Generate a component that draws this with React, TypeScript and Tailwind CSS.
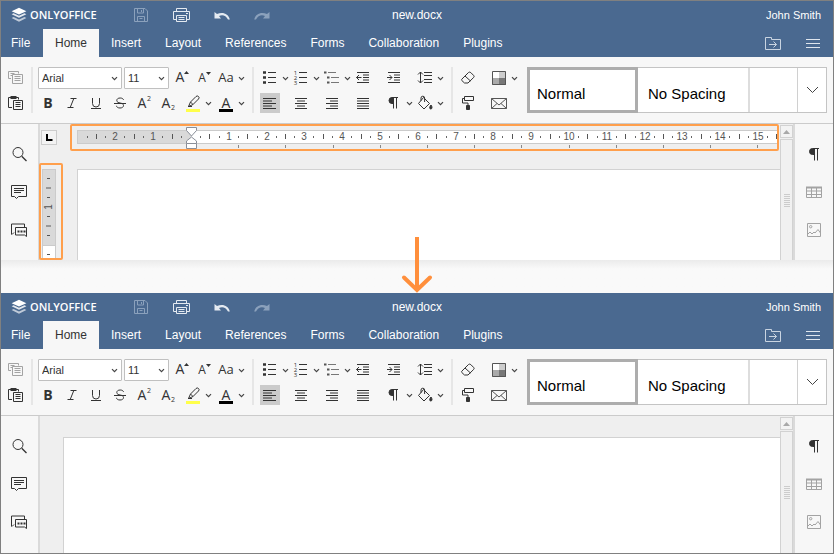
import type { ReactNode } from "react";

const INK = "#333333";
const MUTED = "#a3a3a3";

function Icon({ children, color = INK, size = 20 }: { children: ReactNode; color?: string; size?: number }) {
  return (
    <svg width={size} height={size} viewBox="0 0 20 20" fill="none" stroke={color} strokeWidth={1} className="shrink-0" aria-hidden="true">
      {children}
    </svg>
  );
}

function Chevron() {
  return (
    <svg width="9" height="9" viewBox="0 0 9 9" fill="none" stroke="#444444" strokeWidth={1.2} className="shrink-0" aria-hidden="true">
      <path d="M2 3.2 4.5 5.7 7 3.2" />
    </svg>
  );
}

function Glyph({ children, x = 10, y = 15, size = 14, bold = false }: { children: string; x?: number; y?: number; size?: number; bold?: boolean }) {
  return (
    <text
      x={x}
      y={y}
      fontSize={size}
      textAnchor="middle"
      fill={INK}
      stroke="none"
      fontWeight={bold ? 700 : 400}
      fontFamily='"Open Sans", "Liberation Sans", sans-serif'
    >
      {children}
    </text>
  );
}

/* ---------- title bar ---------- */

function Logo() {
  return (
    <div className="flex items-center gap-[3px]">
      <svg width="16" height="16" viewBox="0 0 16 16" fill="#ffffff" aria-hidden="true">
        <path d="M8 .8 15.4 4.2 8 7.6.6 4.2z" />
        <path d="M.6 7.2 2.6 6.2 8 8.8l5.400-2.600 2 1L8 10.700z" opacity=".85" />
        <path d="M.6 10.900l2-1L8 12.500l5.400-2.600 2 1L8 14.800z" opacity=".65" />
      </svg>
      <span className="font-['Open_Sans','Liberation_Sans',sans-serif] text-[11px] font-semibold leading-4">ONLYOFFICE</span>
    </div>
  );
}

function TitleBar() {
  return (
    <div className="grid h-7 grid-cols-[1fr_auto_1fr] items-center px-[10px]">
      <div className="flex items-center">
        <div className="w-[119px]">
          <Logo />
        </div>
        <button type="button" aria-label="Save" className="flex w-[40px] pl-px">
          <Icon color="#8ba1bc">
            <path d="M3.500 3.500h10.500l2.500 2.500v10.500h-13zM6.500 3.500v4.500h6v-4.500M6.500 16.500v-5h7v5M10.500 5v2M8.500 13.500h3" />
          </Icon>
        </button>
        <button type="button" aria-label="Print" className="flex w-[41px] pl-px">
          <Icon color="#e4eaf1">
            <path d="M5.500 6.500v-3h10v3M5.500 14.500h-3v-8h16v8h-3M5.500 10.500h10v6h-10zM7.500 12.500h6M7.500 14.500h6M15 8.500h2" />
          </Icon>
        </button>
        <button type="button" aria-label="Undo" className="flex w-[40px] pl-px">
          <Icon color="none">
            <path fill="#e4eaf1" d="M2.500 7v6.500h6.500L7 11c3-1.800 7-.8 9 3.500h1.800C16.500 8.500 10.500 6.500 5 9z" />
          </Icon>
        </button>
        <button type="button" aria-label="Redo" className="flex pl-px">
          <Icon color="none">
            <path fill="#8ba1bc" d="M17.500 7v6.500h-6.500l2-2.500c-3-1.800-7-.8-9 3.500H2.200C3.500 8.500 9.500 6.500 15 9z" />
          </Icon>
        </button>
      </div>
      <h1 className="text-xs">new.docx</h1>
      <span className="pr-[2px] text-right text-[11px]">John Smith</span>
    </div>
  );
}

const TABS = ["Insert", "Layout", "References", "Forms", "Collaboration", "Plugins"];

function TabBar() {
  return (
    <nav className="flex h-7 items-stretch text-xs">
      <button type="button" className="w-[42px] pl-[10px] text-left">File</button>
      <button type="button" className="bg-[#f7f7f7] px-3 text-[#333333]">Home</button>
      {TABS.map((t) => (
        <button key={t} type="button" className="px-3">{t}</button>
      ))}
      <div className="ml-auto flex items-center gap-5 pr-[10px]">
        <button type="button" aria-label="Open file location">
          <Icon color="#c9d4e1">
            <path d="M2.500 4.500h6v2h9v10h-15zM6 11.500h7.500M10.500 8.500l3 3-3 3" />
          </Icon>
        </button>
        <button type="button" aria-label="View settings">
          <Icon color="#dfe6ee">
            <path d="M3 6.500h14M3 10.500h14M3 14.500h14" />
          </Icon>
        </button>
      </div>
    </nav>
  );
}

/* ---------- toolbar ---------- */

function Tool({ label, children, slot = "w-[31px]", split = false, active = false }: { label: string; children: ReactNode; slot?: string; split?: boolean; active?: boolean }) {
  return (
    <div className={`flex shrink-0 ${slot}`}>
      <button type="button" aria-label={label} aria-pressed={active} className="flex items-center">
        <span className={`mx-px flex h-5 w-5 items-center justify-center ${active ? "bg-[#cbcbcb]" : ""}`}>{children}</span>
        {split && <Chevron />}
      </button>
    </div>
  );
}

function Separator() {
  return <div className="w-[2px] shrink-0 bg-[#e6e6e6]" />;
}

function Combo({ label, value, options, width }: { label: string; value: string; options: string[]; width: string }) {
  return (
    <label className={`relative flex h-[22px] shrink-0 ${width}`}>
      <span className="sr-only">{label}</span>
      <select defaultValue={value} className="block h-[22px] w-full appearance-none rounded-[1px] border border-[#c0c0c0] bg-white pl-[3px] text-[11px] leading-4 text-[#333333]">
        {options.map((o) => (
          <option key={o}>{o}</option>
        ))}
      </select>
      <span className="pointer-events-none absolute right-[3px] top-[7px]">
        <Chevron />
      </span>
    </label>
  );
}

function FontTools() {
  return (
    <div className="flex w-[217px] shrink-0 flex-col justify-between">
      <div className="flex h-[22px] items-center gap-[2px] pl-[3px]">
        <Combo label="Font" value="Arial" options={["Arial", "Calibri", "Georgia"]} width="w-[84px]" />
        <Combo label="Font size" value="11" options={["10", "11", "12"]} width="w-[45px]" />
        <div className="flex">
          <Tool label="Increase font size" slot="w-[22px]">
            <Icon><Glyph x={8} y={14}>A</Glyph><path d="M12 6h5l-2.500-3z" fill={INK} stroke="none" /></Icon>
          </Tool>
          <Tool label="Decrease font size" slot="w-[22px]">
            <Icon><Glyph x={8} y={14} size={12}>A</Glyph><path d="M12 4h5l-2.500 3z" fill={INK} stroke="none" /></Icon>
          </Tool>
          <Tool label="Change case" split>
            <Icon><Glyph x={10} y={14} size={13}>Aa</Glyph></Icon>
          </Tool>
        </div>
      </div>
      <div className="flex h-5 items-center pl-[2px]">
        <Tool label="Bold" slot="w-6"><Icon><Glyph bold>B</Glyph></Icon></Tool>
        <Tool label="Italic" slot="w-6">
          <Icon><path d="M8.500 5.500h6M5.500 14.500h6M11.800 5.500 8.200 14.500" /></Icon>
        </Tool>
        <Tool label="Underline" slot="w-6">
          <Icon><path d="M6.500 5v5.500a3.500 3.500 0 0 0 7 0V5M5 15.500h10" /></Icon>
        </Tool>
        <Tool label="Strikethrough" slot="w-6">
          <Icon><path d="M13.500 7c0-1-1.200-2-3.300-2C8 5 6.800 6 6.800 7.500c0 3.500 6.700 1.500 6.700 5 0 1.500-1.300 2.500-3.500 2.500s-3.500-1-3.500-2.200M4 10.500h12" /></Icon>
        </Tool>
        <Tool label="Superscript" slot="w-6">
          <Icon><Glyph x={8}>A</Glyph><Glyph x={15} y={8} size={7}>2</Glyph></Icon>
        </Tool>
        <Tool label="Subscript" slot="w-[25px]">
          <Icon><Glyph x={8}>A</Glyph><Glyph x={15} y={17} size={7}>2</Glyph></Icon>
        </Tool>
        <Tool label="Highlight color" slot="w-[33px]" split>
          <Icon>
            <path d="M5.500 13.500 7.500 9 13 3.500q1.200-1.200 2.500 0t0 2.500L10 11.500zM7.500 9 10 11.500M5 13.500h4" />
            <rect x="3" y="16" width="14" height="3" fill="#ffff4a" stroke="none" />
          </Icon>
        </Tool>
        <Tool label="Font color" split slot="w-[31px]">
          <Icon><Glyph>A</Glyph><rect x="3" y="16" width="14" height="3" fill="#000000" stroke="none" /></Icon>
        </Tool>
      </div>
    </div>
  );
}

function ParagraphTools() {
  return (
    <div className="flex w-[193px] shrink-0 flex-col justify-between pl-[4px]">
      <div className="flex h-[22px] items-center">
        <Tool label="Bullets" split>
          <Icon>
            <path d="M8 4.500h8M8 9.500h8M8 14.500h8" />
            <path d="M3 4.500h3M3 9.500h3M3 14.500h3" strokeWidth={2.5} />
          </Icon>
        </Tool>
        <Tool label="Numbering" split>
          <Icon>
            <path d="M8 4.500h8M8 9.500h8M8 14.500h8" />
            <Glyph x={4.500} y={7} size={6}>1</Glyph>
            <Glyph x={4.500} y={12} size={6}>2</Glyph>
            <Glyph x={4.500} y={17} size={6}>3</Glyph>
          </Icon>
        </Tool>
        <Tool label="Multilevel list" split>
          <Icon>
            <path d="M6 4.500h8M9 9.500h8M9 14.500h8" stroke="#777777" />
            <path d="M2 4.500h2.500M5 9.500h2.500M5 14.500h2.500" stroke="#555555" strokeWidth={2} />
          </Icon>
        </Tool>
        <Tool label="Decrease indent">
          <Icon><path d="M4 4.500h12M10 7h6M10 9.500h6M10 12h6M4 14.500h12M3.500 9.500h5M6 7 3.500 9.500 6 12" /></Icon>
        </Tool>
        <Tool label="Increase indent">
          <Icon><path d="M4 4.500h12M10 7h6M10 9.500h6M10 12h6M4 14.500h12M3 9.500h5M5.500 7 8 9.500 5.500 12" /></Icon>
        </Tool>
        <Tool label="Line spacing" split>
          <Icon><path d="M9 4.500h8M9 7.500h8M9 11.500h8M9 14.500h8M5.500 4v11M3 6.500 5.500 4 8 6.500M3 12.500 5.500 15 8 12.500" /></Icon>
        </Tool>
      </div>
      <div className="flex h-5 items-center">
        <Tool label="Align left" active>
          <Icon><path d="M3 5.500h13M3 8h9M3 10.500h13M3 13h9M3 15.500h13" /></Icon>
        </Tool>
        <Tool label="Align center">
          <Icon><path d="M4 5.500h12M6 8h8M4 10.500h12M6 13h8M4 15.500h12" /></Icon>
        </Tool>
        <Tool label="Align right">
          <Icon><path d="M4 5.500h12M8 8h8M4 10.500h12M8 13h8M4 15.500h12" /></Icon>
        </Tool>
        <Tool label="Justify">
          <Icon><path d="M4 5.500h12M4 8h12M4 10.500h12M4 13h12M4 15.500h12" /></Icon>
        </Tool>
        <Tool label="Nonprinting characters" split>
          <Icon>
            <path d="M9.500 4v11.500M12.500 4v11.500M9 4.500h5" />
            <path d="M9.500 4.500H8a3 3 0 0 0 0 6h1.500z" fill={INK} />
          </Icon>
        </Tool>
        <Tool label="Shading" split>
          <Icon>
            <path d="M8.500 4.500 14.500 10.500 9 16 3.500 10.500zM6 7.800V5a1.800 1.800 0 0 1 3.600 0v4" />
            <path d="M16 12c1.500 2 1.200 4-.2 4s-1.600-2 .2-4z" fill={INK} />
          </Icon>
        </Tool>
      </div>
    </div>
  );
}

function ExtraTools() {
  return (
    <div className="flex w-[74px] shrink-0 flex-col justify-between pl-[4px]">
      <div className="flex h-[22px] items-center">
        <Tool label="Clear style">
          <Icon><path d="M3.800 11.200 10.500 4.500q1.200-.9 2.300.1l2.800 2.800q1 1 .1 2L10 15H6.500l-2.700-2.500q-.5-.7 0-1.300zM7 8l5.500 5" /></Icon>
        </Tool>
        <Tool label="Color scheme" split>
          <Icon>
            <g stroke="none">
              <rect x="3" y="3" width="7" height="7" fill="#ffffff" />
              <rect x="10" y="3" width="7" height="7" fill="#cccccc" />
              <rect x="3" y="10" width="7" height="7" fill="#aaaaaa" />
              <rect x="10" y="10" width="7" height="7" fill="#777777" />
            </g>
            <path d="M3.500 3.500h13v13h-13z" stroke="#555555" />
          </Icon>
        </Tool>
      </div>
      <div className="flex h-5 items-center">
        <Tool label="Copy style">
          <Icon>
            <path d="M6.500 3.500h9v4h-9zM6.500 5.500h-2v4.500h5.500v2" />
            <path d="M8.500 12.500h3v4h-3z" fill={INK} />
          </Icon>
        </Tool>
        <Tool label="Mail merge">
          <Icon color="#555555"><path d="M2.500 5.500h15v10h-15zM2.500 5.500 10 12l7.500-6.500M2.500 15.500 8 10.500M17.500 15.500 12 10.500" /></Icon>
        </Tool>
      </div>
    </div>
  );
}

function StyleGallery() {
  return (
    <div className="mr-[6px] flex h-[46px] min-w-0 flex-1 border border-[#c4c4c4] bg-white text-[15px] text-black">
      <button type="button" aria-pressed="true" className="-m-px w-[111px] shrink-0 border-[3px] border-[#adadad] pl-[7px] pt-2 text-left">Normal</button>
      <button type="button" className="w-[113px] shrink-0 border-r-2 border-[#dddddd] pl-[11px] pt-2 text-left">No Spacing</button>
      <div className="flex-1" />
      <button type="button" aria-label="More styles" className="flex w-[29px] shrink-0 items-center justify-center border-l border-[#d0d0d0]">
        <svg width="13" height="8" viewBox="0 0 13 8" fill="none" stroke="#444444" aria-hidden="true"><path d="M1 1 6.500 6.500 12 1" /></svg>
      </button>
    </div>
  );
}

function Toolbar() {
  return (
    <div className="flex h-[67px] items-start border-b border-[#cbcbcb] bg-[#f7f7f7] pt-[10px]">
      <div className="flex min-w-0 flex-1 [&>*]:h-[46px]">
        <div className="flex w-[30px] shrink-0 flex-col justify-between pl-[4px]">
          <div className="flex h-[22px] items-center">
            <Tool label="Copy" slot="w-[22px]">
              <Icon color={MUTED}><path d="M5 10.500H2.500v-7h10v2M4.500 5.500h4M4.500 7.500h2M6.500 6.500h10v9h-10zM8.500 8.500h6M8.500 10.500h6M8.500 12.500h6" /></Icon>
            </Tool>
          </div>
          <Tool label="Paste" slot="w-[22px]">
            <Icon><path d="M6 14.500H2.500v-10h10v2M7.500 7.500h9v9h-9zM9.500 9.500h5M9.500 11.500h5M9.500 13.500h5" /><path d="M4.500 4.500h6" strokeWidth={3} /></Icon>
          </Tool>
        </div>
        <Separator />
        <div className="flex pl-[2px]"><FontTools /></div>
        <Separator />
        <div className="flex pl-px"><ParagraphTools /></div>
        <div className="flex pl-[3px]"><Separator /></div>
        <ExtraTools />
        <StyleGallery />
      </div>
    </div>
  );
}

/* ---------- side panels ---------- */

function LeftPanel() {
  return (
    <aside className="flex w-[39px] shrink-0 flex-col items-center gap-[18px] border-r-2 border-[#dadada] bg-[#f7f7f7] pr-[2px] pt-5">
      <button type="button" aria-label="Find">
        <Icon><circle cx="9" cy="8.500" r="5" /><path d="M12.700 12.200 17.500 17" strokeWidth={1.3} /></Icon>
      </button>
      <button type="button" aria-label="Comments">
        <Icon><path d="M2.500 3.500h15v11h-8L7.500 16.500 5.500 14.500h-3zM5 6.500h10M5 8.500h10M5 10.500h7" /></Icon>
      </button>
      <button type="button" aria-label="Chat">
        <Icon><path d="M3 14.500 5 12.500M2.500 14.500v-10.500h13v3M6.500 7.500h11v9l-2-1.500h-9z" /><path d="M8.500 11.500h2M11.500 11.500h2M14.500 11.500h2" strokeWidth={2} /></Icon>
      </button>
    </aside>
  );
}

function RightPanel() {
  return (
    <aside className="flex w-10 shrink-0 flex-col items-center gap-[18px] border-l-2 border-[#dadada] bg-[#f7f7f7] pt-5">
      <button type="button" aria-label="Paragraph settings">
        <Icon>
          <path d="M10.500 4v12.500M13.500 4v12.500M9 4.500h6" />
          <path d="M10.500 4.500H8.500a3 3 0 0 0 0 6h2z" fill={INK} />
        </Icon>
      </button>
      <button type="button" aria-label="Table settings">
        <Icon color={MUTED}><path d="M2.500 5.500h15v10h-15zM2.500 9h15M2.500 12.500h15M7.500 5.500v10M12.500 5.500v10" /><path d="M2 5.500h16" strokeWidth={2} /></Icon>
      </button>
      <button type="button" aria-label="Image settings">
        <Icon color={MUTED}><path d="M3.500 3.500h13v13h-13zM4 14l2-2 2 2 2-2 1 1 3-3.500 2.500 3.500" /><circle cx="6.700" cy="6.700" r="1.200" /></Icon>
      </button>
    </aside>
  );
}

function ScrollBar() {
  return (
    <div className="flex w-[13px] shrink-0 flex-col gap-px bg-[#efefef] pt-px">
      <button type="button" aria-label="Scroll up" className="flex h-[13px] items-center justify-center border border-[#d2d2d2] bg-[#f3f3f3]">
        <svg width="7" height="4" viewBox="0 0 7 4" fill="#a8a8a8" aria-hidden="true"><path d="M0 4h7L3.500 0z" /></svg>
      </button>
      <div className="flex flex-1 flex-col items-center gap-px border-x border-t border-[#d2d2d2] bg-[#f1f1f1] pt-[54px]">
        {[0, 1, 2, 3, 4, 5, 6].map((n) => (
          <span key={n} className="h-px w-[6px] bg-[#cccccc]" />
        ))}
      </div>
    </div>
  );
}

/* ---------- rulers ---------- */

const CM = 37.8;
const ORIGIN = 114;

function HorizontalRuler() {
  const quarters = Array.from({ length: 74 }, (_, n) => n - 11).filter((n) => n !== 0);
  return (
    <svg width="100%" height="20" className="block overflow-visible" role="img" aria-label="Horizontal ruler">
      <rect x="0" y="0" width="100%" height="14" fill="#cbcbcb" />
      <rect x="1" y="1" width="100%" height="12" fill="#ffffff" />
      <rect x="1" y="1" width={ORIGIN} height="12" fill="#d9d9d9" />
      {quarters.map((n) => {
        const x = ORIGIN + (n * CM) / 4;
        if (n % 4 === 0) {
          return (
            <text key={n} x={Math.round(x)} y="10" fontSize="10" textAnchor="middle" fill="#555555" className="font-['Liberation_Sans',sans-serif]">
              {Math.abs(n / 4)}
            </text>
          );
        }
        return n % 2 === 0 ? (
          <rect key={n} x={Math.floor(x)} y="4" width="1" height="5" fill="#555555" />
        ) : (
          <rect key={n} x={Math.floor(x)} y="6" width="1" height="2" fill="#666666" />
        );
      })}
      {Array.from({ length: 12 }, (_, n) => (
        <rect key={n} x={Math.round(ORIGIN + (n + 1) * 47.2)} y="15" width="1" height="3" fill="#888888" />
      ))}
      <g fill="#ffffff" stroke="#8a8f99">
        <path d="M109.500-2.500h10v3l-5 5.500-5-5.500z" />
        <path d="M114.500 7l5 4v2.500h-10V11z" />
        <path d="M109.500 13.500h10v5h-10z" />
      </g>
    </svg>
  );
}

function VerticalRuler() {
  return (
    <svg width="14" height="91" className="block" role="img" aria-label="Vertical ruler">
      <rect x="0" y="0" width="14" height="91" fill="#cbcbcb" />
      <rect x="1" y="1" width="12" height="75" fill="#d9d9d9" />
      <rect x="1" y="77" width="12" height="14" fill="#ffffff" />
      {[9, 28, 47, 66, 85].map((y) => (
        <rect key={y} x="5" y={y} width="3" height="1" fill="#555555" />
      ))}
      {[18, 56].map((y) => (
        <rect key={y} x="4" y={y} width="5" height="2" fill="#999999" />
      ))}
      <text x="10" y="38" fontSize="10" fill="#555555" textAnchor="middle" transform="rotate(-90 10 38)" className="font-['Liberation_Sans',sans-serif]">
        1
      </text>
    </svg>
  );
}

function RuledCanvas() {
  return (
    <div className="relative flex min-w-0 flex-1 flex-col bg-[#efefef]">
      <div className="flex h-[45px] items-start pl-px pr-[2px] pt-[6px]">
        <button type="button" aria-label="Tab stop" className="mr-5 flex h-[15px] w-4 shrink-0 items-center justify-center border border-[#cccccc] bg-[#f3f3f3]">
          <svg width="8" height="7" viewBox="0 0 8 7" fill="none" stroke="#000000" strokeWidth={2} aria-hidden="true"><path d="M2 0v6h5.500" /></svg>
        </button>
        <div className="min-w-0 flex-1">
          <HorizontalRuler />
        </div>
      </div>
      <div className="flex items-end">
        <div className="w-[37px] shrink-0 pl-[2px]">
          <VerticalRuler />
        </div>
        <div className="h-[91px] flex-1 border-l border-t border-[#d2d2d2] bg-white" />
      </div>
      <div className="absolute left-[30px] right-px top-0 h-[27px] rounded-[2px] border-2 border-[#ff9f4c]" />
      <div className="absolute -left-px bottom-0 top-[39px] w-6 rounded-[2px] border-2 border-[#ff9f4c]" />
    </div>
  );
}

function PlainCanvas() {
  return (
    <div className="min-w-0 flex-1 bg-[#efefef] pl-[23px] pt-[21px]">
      <div className="h-[116px] border-l border-t border-[#d2d2d2] bg-white" />
    </div>
  );
}

function Editor({ children }: { children: ReactNode }) {
  return (
    <section>
      <header className="bg-[#4a6990] text-white">
        <TitleBar />
        <TabBar />
      </header>
      <Toolbar />
      <div className="flex">
        <LeftPanel />
        {children}
        <ScrollBar />
        <RightPanel />
      </div>
    </section>
  );
}

export default function App() {
  return (
    <main className="border border-[#808080] bg-[#f9f9f9] font-['Liberation_Sans',Arial,sans-serif]">
      <Editor>
        <RuledCanvas />
      </Editor>
      <div className="relative h-[33px] bg-linear-to-b from-[#ebebeb] to-[#f9f9f9] to-[9px]">
        <svg width="32" height="58" viewBox="0 0 32 58" fill="none" stroke="#ff8f3c" strokeWidth={4} className="absolute bottom-0 left-1/2 -translate-x-1/2" aria-hidden="true">
          <path d="M16 2v53" />
          <path d="M3 42.500 16 55l13-12.500" strokeLinecap="round" />
        </svg>
      </div>
      <Editor>
        <PlainCanvas />
      </Editor>
    </main>
  );
}
